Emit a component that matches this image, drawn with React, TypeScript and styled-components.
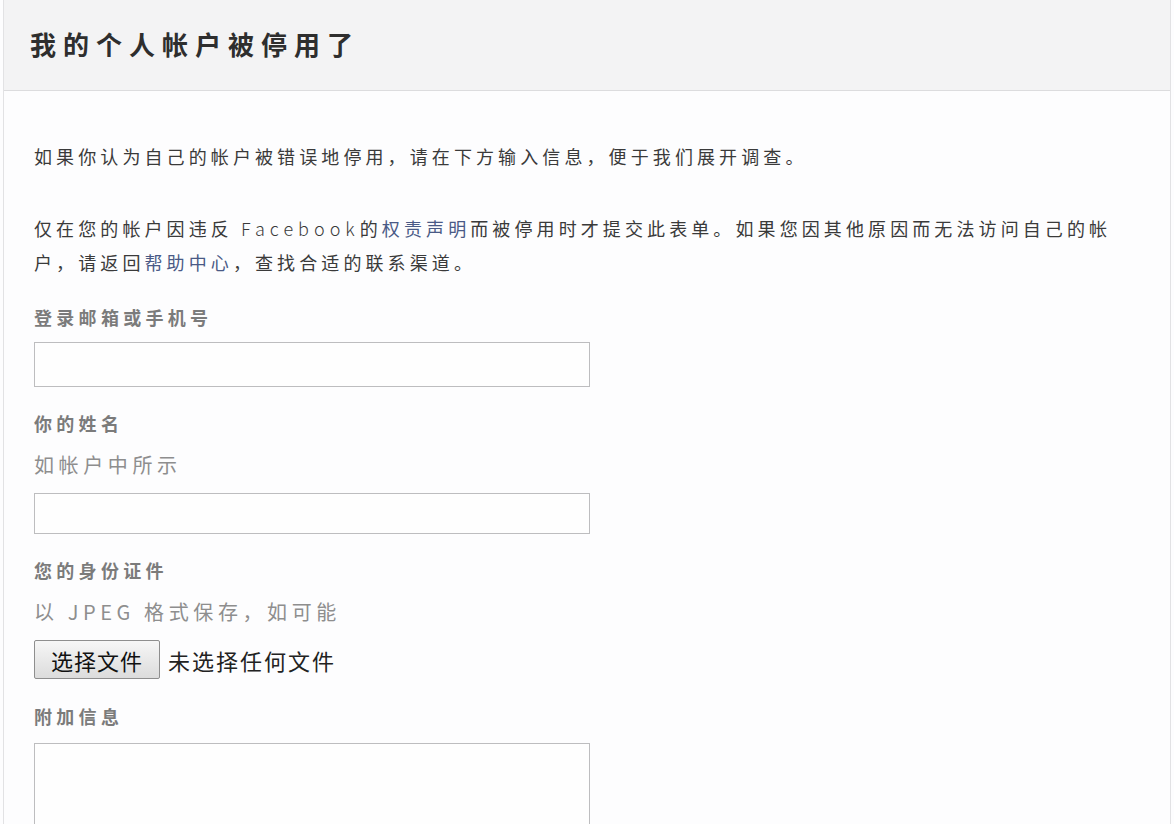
import styled, { createGlobalStyle } from 'styled-components';

const GlobalStyle = createGlobalStyle`
  html, body {
    margin: 0;
    padding: 0;
    background: #fdfdfe;
  }
  body {
    font-family: "Noto Sans CJK SC", "Liberation Sans", sans-serif;
    color: #333;
  }
`;

const Card = styled.div`
  margin: 0 3px;
  min-height: 824px;
  border-left: 1px solid #e2e2e4;
  border-right: 1px solid #e2e2e4;
  background: #fdfdfe;
`;

const Header = styled.div`
  height: 91px;
  box-sizing: border-box;
  display: flex;
  align-items: center;
  padding: 0 0 4px 26px;
  background: #f3f3f4;
  border-bottom: 1px solid #dcdcde;
`;

const Title = styled.h1`
  margin: 0;
  font-size: 26px;
  font-weight: 700;
  letter-spacing: 7px;
  color: #2e2e2e;
`;

const Body = styled.div`
  padding: 48px 30px 0 30px;
`;

const Para = styled.p<{ $gap?: number }>`
  margin: 0 0 ${(p) => p.$gap ?? 0}px;
  font-size: 18px;
  line-height: 34px;
  letter-spacing: 4.1px;
  color: #3a3a3a;
  max-width: 1092px;
`;

const Latin = styled.span`
  letter-spacing: 5px;
  font-weight: 300;
`;

const Link = styled.a`
  color: #4a5a86;
  text-decoration: none;
`;

const Field = styled.div`
  display: flex;
  flex-direction: column;
  align-items: flex-start;
`;

const Label = styled.div`
  font-size: 18px;
  font-weight: 700;
  letter-spacing: 4.3px;
  color: #7b7b7b;
  line-height: 26px;
  margin: 13px 0 12px;
`;

const Hint = styled.div`
  font-size: 20px;
  letter-spacing: 4.6px;
  color: #8e8e8e;
  line-height: 26px;
  margin: 4px 0 15px;
`;

const TextInput = styled.input<{ $h: number }>`
  width: 556px;
  height: ${(p) => p.$h}px;
  box-sizing: border-box;
  border: 1px solid #bdbdbf;
  background: #fefefe;
  margin: 0 0 10px;
`;

const FileRow = styled.div`
  display: flex;
  align-items: center;
  gap: 8px;
  margin: 0 0 11px;
`;

const FileButton = styled.button`
  width: 126px;
  height: 39px;
  box-sizing: border-box;
  border: 1px solid #8e8e8e;
  border-radius: 2px;
  background: linear-gradient(#f6f6f6, #dcdcdc);
  font-family: "Noto Sans CJK SC", sans-serif;
  font-size: 22px;
  letter-spacing: 1px;
  line-height: 1;
  color: #111;
  padding: 0;
`;

const FileName = styled.span`
  font-size: 22px;
  letter-spacing: 2px;
  color: #222;
`;

const TextArea = styled.textarea`
  width: 556px;
  height: 110px;
  box-sizing: border-box;
  border: 1px solid #bdbdbf;
  background: #fefefe;
  resize: none;
  margin-top: 2px;
`;

export default function App() {
  return (
    <>
      <GlobalStyle />
      <Card>
        <Header>
          <Title>我的个人帐户被停用了</Title>
        </Header>
        <Body>
          <Para $gap={38}>
            如果你认为自己的帐户被错误地停用，请在下方输入信息，便于我们展开调查。
          </Para>
          <Para $gap={12}>
            仅在您的帐户因违反 <Latin>Facebook</Latin>的<Link>权责声明</Link>而被停用时才提交此表单。如果您因其他原因而无法访问自己的帐户，请返回<Link>帮助中心</Link>，查找合适的联系渠道。
          </Para>
          <Field>
            <Label>登录邮箱或手机号</Label>
            <TextInput $h={45} />
          </Field>
          <Field>
            <Label>你的姓名</Label>
            <Hint>如帐户中所示</Hint>
            <TextInput $h={41} />
          </Field>
          <Field>
            <Label>您的身份证件</Label>
            <Hint>以 JPEG 格式保存，如可能</Hint>
            <FileRow>
              <FileButton>选择文件</FileButton>
              <FileName>未选择任何文件</FileName>
            </FileRow>
          </Field>
          <Field>
            <Label>附加信息</Label>
            <TextArea />
          </Field>
        </Body>
      </Card>
    </>
  );
}
